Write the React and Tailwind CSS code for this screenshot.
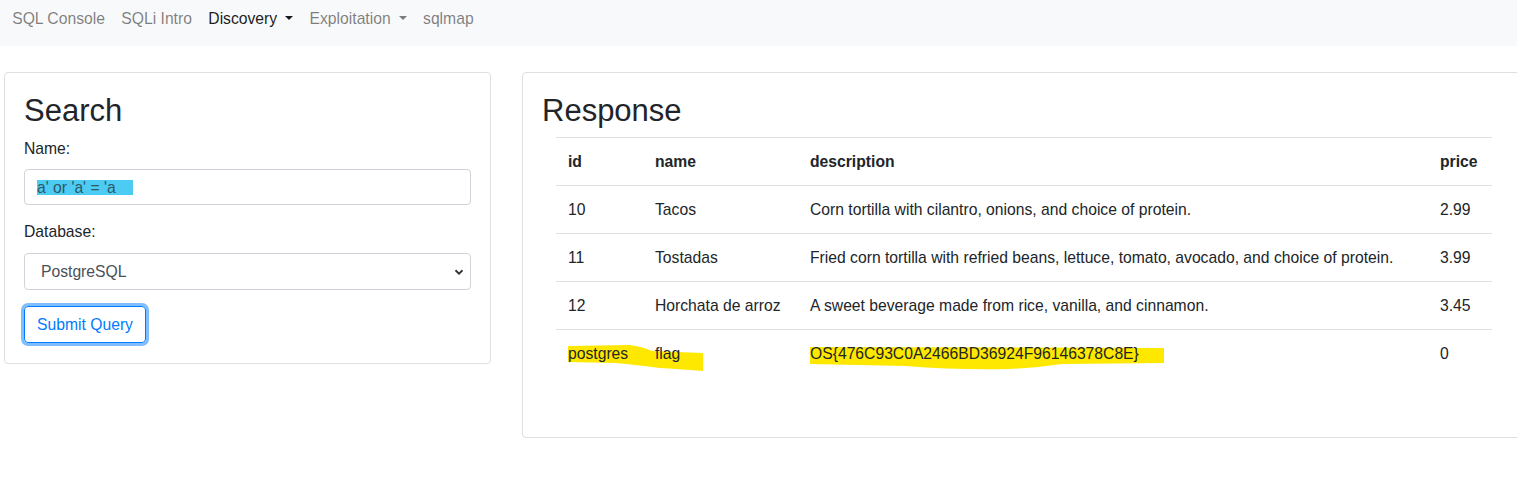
import React from "react";

const rows = [
  { id: "10", name: "Tacos", description: "Corn tortilla with cilantro, onions, and choice of protein.", price: "2.99" },
  { id: "11", name: "Tostadas", description: "Fried corn tortilla with refried beans, lettuce, tomato, avocado, and choice of protein.", price: "3.99" },
  { id: "12", name: "Horchata de arroz", description: "A sweet beverage made from rice, vanilla, and cinnamon.", price: "3.45" },
  { id: "postgres", name: "flag", description: "OS{476C93C0A2466BD36924F96146378C8E}", price: "0" },
];

function Caret() {
  return (
    <span className="ml-[8px] inline-block h-0 w-0 border-x-[4.5px] border-t-[4.5px] border-x-transparent border-t-current align-[3px]" />
  );
}

function NavBar() {
  const links = [
    { label: "SQL Console" },
    { label: "SQLi Intro" },
    { label: "Discovery", caret: true, active: true },
    { label: "Exploitation", caret: true },
    { label: "sqlmap" },
  ];
  return (
    <nav className="flex h-[46px] items-center bg-[#f8f9fa] pl-[4px]">
      {links.map((l) => (
        <a
          key={l.label}
          className={`flex items-center px-[8.2px] pb-[10px] leading-[23px] ${l.active ? "text-[rgba(0,0,0,0.9)]" : "text-[rgba(0,0,0,0.5)]"}`}
        >
          {l.label}
          {l.caret && <Caret />}
        </a>
      ))}
    </nav>
  );
}

function SearchCard() {
  return (
    <div className="w-[487px] shrink-0 rounded-[4px] border border-[#dfdfdf] px-[19px] pt-[19px] pb-[20px]">
      <h2 className="mb-[8px] text-[31px] leading-[37px]">Search</h2>
      <label className="mb-[9px] block leading-[23px]">Name:</label>
      <div className="flex h-[36px] items-center rounded-[4px] border border-[#ced4da] pl-[12px] text-[#2f5866]">
        <span className="inline-block h-[15px] w-[96px] bg-[#4ccbf3] leading-[15px]">a' or 'a' = 'a</span>
      </div>
      <label className="mt-[15px] mb-[10px] block leading-[23px]">Database:</label>
      <div className="flex h-[37px] items-center justify-between rounded-[4px] border border-[#ced4da] pl-[16px] pr-[6px] text-[#495057]">
        <span>PostgreSQL</span>
        <svg width="10" height="10" viewBox="0 0 10 10" className="text-[#333]">
          <path d="M1.5 3.3 L5 6.6 L8.5 3.3" fill="none" stroke="currentColor" strokeWidth="1.9" />
        </svg>
      </div>
      <button className="mt-[16px] flex h-[37px] w-[122px] items-center justify-center rounded-[4px] border border-[#007bff] text-[#007bff] shadow-[0_0_0_3px_rgba(0,123,255,0.5)]">
        Submit Query
      </button>
    </div>
  );
}

function ResponseCard() {
  return (
    <div className="w-[1004px] shrink-0 rounded-[4px] border border-[#dfdfdf] px-[19px] pt-[19px] pb-[21px]">
      <h2 className="mb-[8px] text-[31px] leading-[37px]">Response</h2>
      <div className="relative ml-[14px] mb-[39px] w-[936px]">
        {/* marker highlights */}
        <svg className="absolute left-0 top-0" width="936" height="260" viewBox="0 0 936 260">
          <path d="M12 209 L74 208 Q88 210 96 214 L147 216 L147 234 Q120 232 104 231 Q80 228 60 226 L12 225 Z" fill="#ffe800" />
          <path d="M254 210 L608 211 L608 226 L506 227 Q480 231 452 232 Q400 233 350 229 L254 227 Z" fill="#ffe800" />
        </svg>
        <table className="relative w-[936px] table-fixed border-collapse text-left">
          <colgroup>
            <col className="w-[87px]" />
            <col className="w-[155px]" />
            <col className="w-[630px]" />
            <col className="w-[64px]" />
          </colgroup>
          <thead>
            <tr className="border-t border-[#dee2e6] font-bold">
              <th className="px-[12px] py-[12px] leading-[23px]">id</th>
              <th className="px-[12px] py-[12px] leading-[23px]">name</th>
              <th className="px-[12px] py-[12px] leading-[23px]">description</th>
              <th className="px-[12px] py-[12px] leading-[23px]">price</th>
            </tr>
          </thead>
          <tbody>
            {rows.map((r) => (
              <tr key={r.id} className="border-t border-[#dee2e6]">
                <td className="px-[12px] py-[12px] leading-[23px] whitespace-nowrap">{r.id}</td>
                <td className="px-[12px] py-[12px] leading-[23px] whitespace-nowrap">{r.name}</td>
                <td className="px-[12px] py-[12px] leading-[23px] whitespace-nowrap">{r.description}</td>
                <td className="px-[12px] py-[12px] leading-[23px]">{r.price}</td>
              </tr>
            ))}
          </tbody>
        </table>
      </div>
    </div>
  );
}

export default function App() {
  return (
    <div className="h-[478px] w-full overflow-hidden bg-white font-['Liberation_Sans',Arial,sans-serif] text-[15.7px] text-[#212529]">
      <NavBar />
      <div className="mt-[26px] flex items-start gap-[31px] pl-[4px]">
        <SearchCard />
        <ResponseCard />
      </div>
    </div>
  );
}
